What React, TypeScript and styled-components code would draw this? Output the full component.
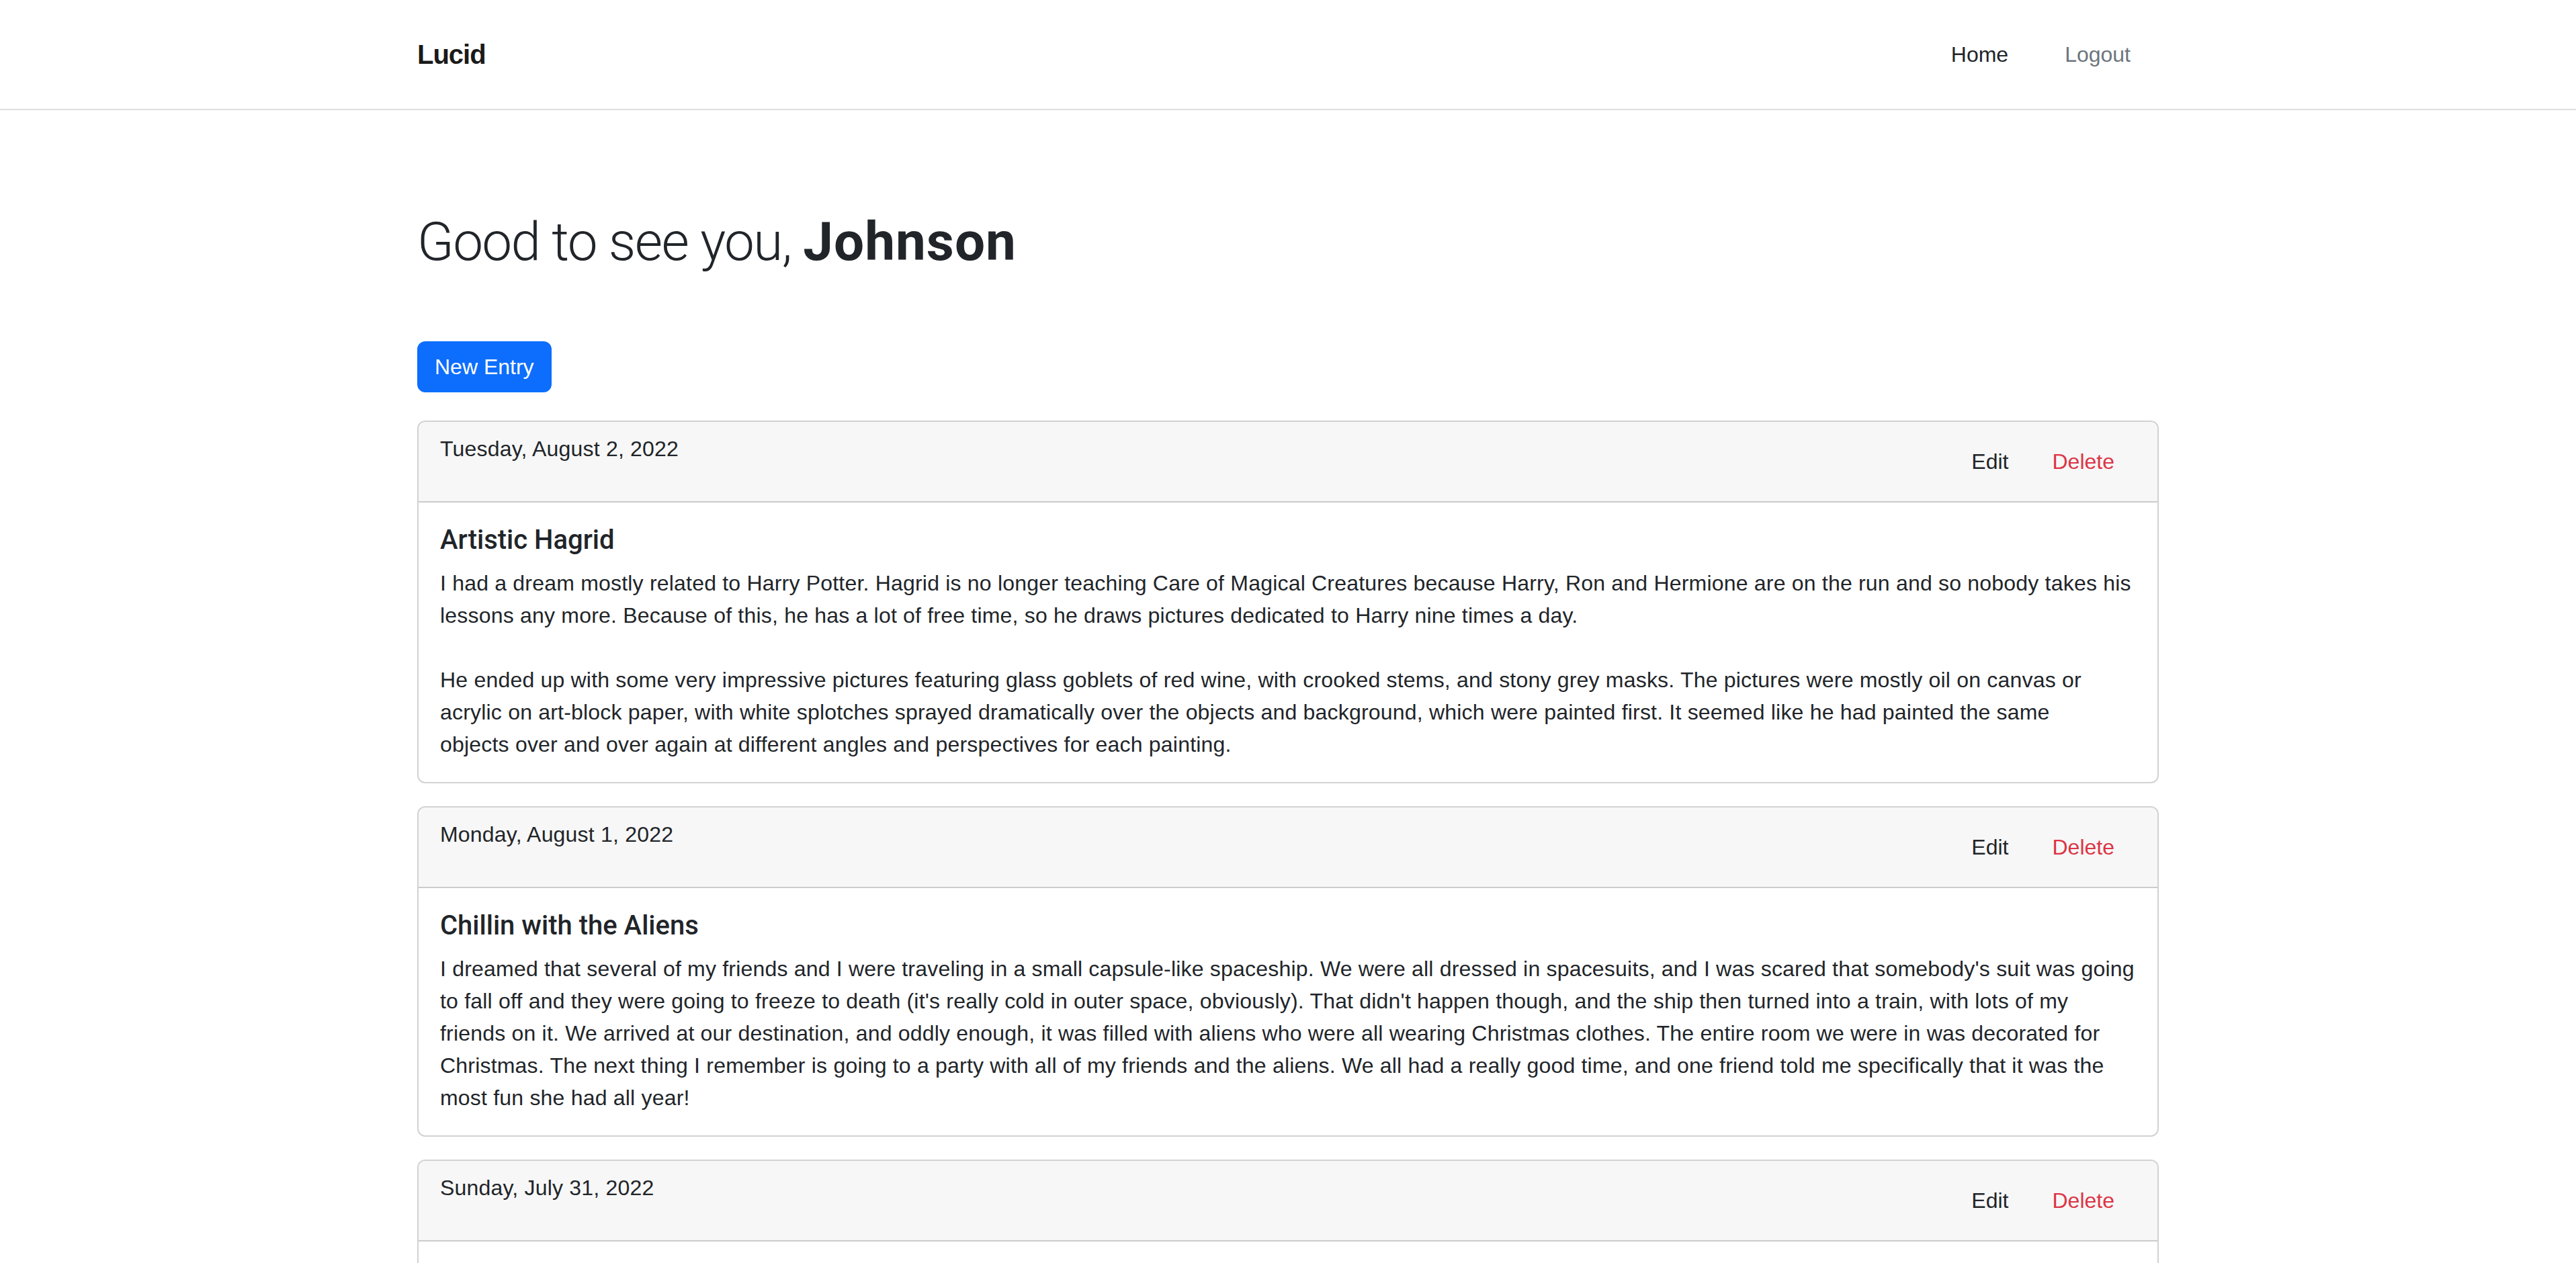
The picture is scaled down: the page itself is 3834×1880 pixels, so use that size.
import React from "react";
import styled, { createGlobalStyle } from "styled-components";

const GlobalStyle = createGlobalStyle`
  *, *::before, *::after { box-sizing: border-box; }
  html, body { margin: 0; padding: 0; background: #ffffff; }
  body {
    font-family: "Liberation Sans", Arial, sans-serif;
    font-size: 32px;
    line-height: 1.5;
    color: #212529;
  }
`;

const Container = styled.div`
  width: 2592px;
  margin-left: calc((100vw - 2592px) / 2);
`;

const NavBar = styled.nav`
  height: 164px;
  border-bottom: 2px solid #dedede;
  background: #ffffff;
`;

const NavInner = styled(Container)`
  height: 100%;
  display: flex;
  align-items: center;
  justify-content: space-between;
`;

const Brand = styled.a`
  font-size: 40px;
  font-weight: 700;
  line-height: 60px;
  letter-spacing: -1px;
  color: #1a1a1a;
  text-decoration: none;
`;

const NavLinks = styled.div`
  display: flex;
  align-items: center;
  gap: 52px;
  padding-right: 26px;
`;

const NavLink = styled.a<{ $active?: boolean }>`
  padding: 0 16px;
  font-size: 32px;
  line-height: 48px;
  color: ${(p) => (p.$active ? "#212529" : "#6c757d")};
  text-decoration: none;
`;

const Main = styled(Container)`
  padding-top: 148px;
`;

const Greeting = styled.h1`
  margin: 0 0 100px;
  font-family: Roboto, "Liberation Sans", sans-serif;
  font-size: 80px;
  font-weight: 300;
  line-height: 1.2;
  letter-spacing: -1.6px;
`;

const Name = styled.strong`
  font-weight: 700;
  letter-spacing: 1px;
`;

const PrimaryButton = styled.button`
  display: block;
  margin: 0 0 42px;
  padding: 12px 24px;
  font-family: inherit;
  font-size: 32px;
  line-height: 48px;
  color: #ffffff;
  background: #0d6efd;
  border: 2px solid #0d6efd;
  border-radius: 12px;
  cursor: pointer;
`;

const EntryList = styled.div`
  display: flex;
  flex-direction: column;
  gap: 34px;
  padding-bottom: 64px;
`;

const Card = styled.article`
  border: 2px solid rgba(0, 0, 0, 0.175);
  border-radius: 12px;
  overflow: hidden;
  background: #ffffff;
`;

const CardHeader = styled.header`
  display: flex;
  justify-content: space-between;
  align-items: center;
  padding: 16px 32px;
  background: #f7f7f7;
  border-bottom: 2px solid rgba(0, 0, 0, 0.175);
`;

const DateText = styled.div`
  align-self: flex-start;
  line-height: 48px;
  letter-spacing: 0.2px;
`;

const Actions = styled.div`
  display: flex;
  gap: 13px;
  padding: 5px 6px 5px 0;
`;

const ActionButton = styled.button<{ $danger?: boolean }>`
  padding: 12px 24px;
  font-family: inherit;
  font-size: 32px;
  line-height: 48px;
  color: ${(p) => (p.$danger ? "#dc3545" : "#212529")};
  background: transparent;
  border: 2px solid transparent;
  border-radius: 12px;
  cursor: pointer;
`;

const CardBody = styled.div`
  padding: 32px;
`;

const CardTitle = styled.h5`
  margin: 0 0 16px;
  font-family: Roboto, "Liberation Sans", sans-serif;
  font-size: 40px;
  font-weight: 500;
  line-height: 1.2;
`;

const CardText = styled.p`
  margin: 0;
  white-space: pre-line;
  letter-spacing: 0.2px;
`;

type Entry = { date: string; title: string; text: string };

const entries: Entry[] = [
  {
    date: "Tuesday, August 2, 2022",
    title: "Artistic Hagrid",
    text:
      "I had a dream mostly related to Harry Potter. Hagrid is no longer teaching Care of Magical Creatures because Harry, Ron and Hermione are on the run and so nobody takes his lessons any more. Because of this, he has a lot of free time, so he draws pictures dedicated to Harry nine times a day.\n\nHe ended up with some very impressive pictures featuring glass goblets of red wine, with crooked stems, and stony grey masks. The pictures were mostly oil on canvas or acrylic on art-block paper, with white splotches sprayed dramatically over the objects and background, which were painted first. It seemed like he had painted the same\nobjects over and over again at different angles and perspectives for each painting.",
  },
  {
    date: "Monday, August 1, 2022",
    title: "Chillin with the Aliens",
    text:
      "I dreamed that several of my friends and I were traveling in a small capsule-like spaceship. We were all dressed in spacesuits, and I was scared that somebody's suit was going to fall off and they were going to freeze to death (it's really cold in outer space, obviously). That didn't happen though, and the ship then turned into a train, with lots of my friends on it. We arrived at our destination, and oddly enough, it was filled with aliens who were all wearing Christmas clothes. The entire room we were in was decorated for Christmas. The next thing I remember is going to a party with all of my friends and the aliens. We all had a really good time, and one friend told me specifically that it was the most fun she had all year!",
  },
  {
    date: "Sunday, July 31, 2022",
    title: "The Endless Library",
    text:
      "I was wandering through a library that never seemed to end. Every shelf led to another corridor of books, and each book I opened was written in a language I almost understood.",
  },
];

function EntryCard({ entry }: { entry: Entry }) {
  return (
    <Card>
      <CardHeader>
        <DateText>{entry.date}</DateText>
        <Actions>
          <ActionButton type="button">Edit</ActionButton>
          <ActionButton type="button" $danger>
            Delete
          </ActionButton>
        </Actions>
      </CardHeader>
      <CardBody>
        <CardTitle>{entry.title}</CardTitle>
        <CardText>{entry.text}</CardText>
      </CardBody>
    </Card>
  );
}

export default function App() {
  return (
    <>
      <GlobalStyle />
      <NavBar>
        <NavInner>
          <Brand href="#">Lucid</Brand>
          <NavLinks>
            <NavLink href="#" $active>
              Home
            </NavLink>
            <NavLink href="#">Logout</NavLink>
          </NavLinks>
        </NavInner>
      </NavBar>
      <Main>
        <Greeting>
          Good to see you, <Name>Johnson</Name>
        </Greeting>
        <PrimaryButton type="button">New Entry</PrimaryButton>
        <EntryList>
          {entries.map((e) => (
            <EntryCard key={e.date} entry={e} />
          ))}
        </EntryList>
      </Main>
    </>
  );
}
